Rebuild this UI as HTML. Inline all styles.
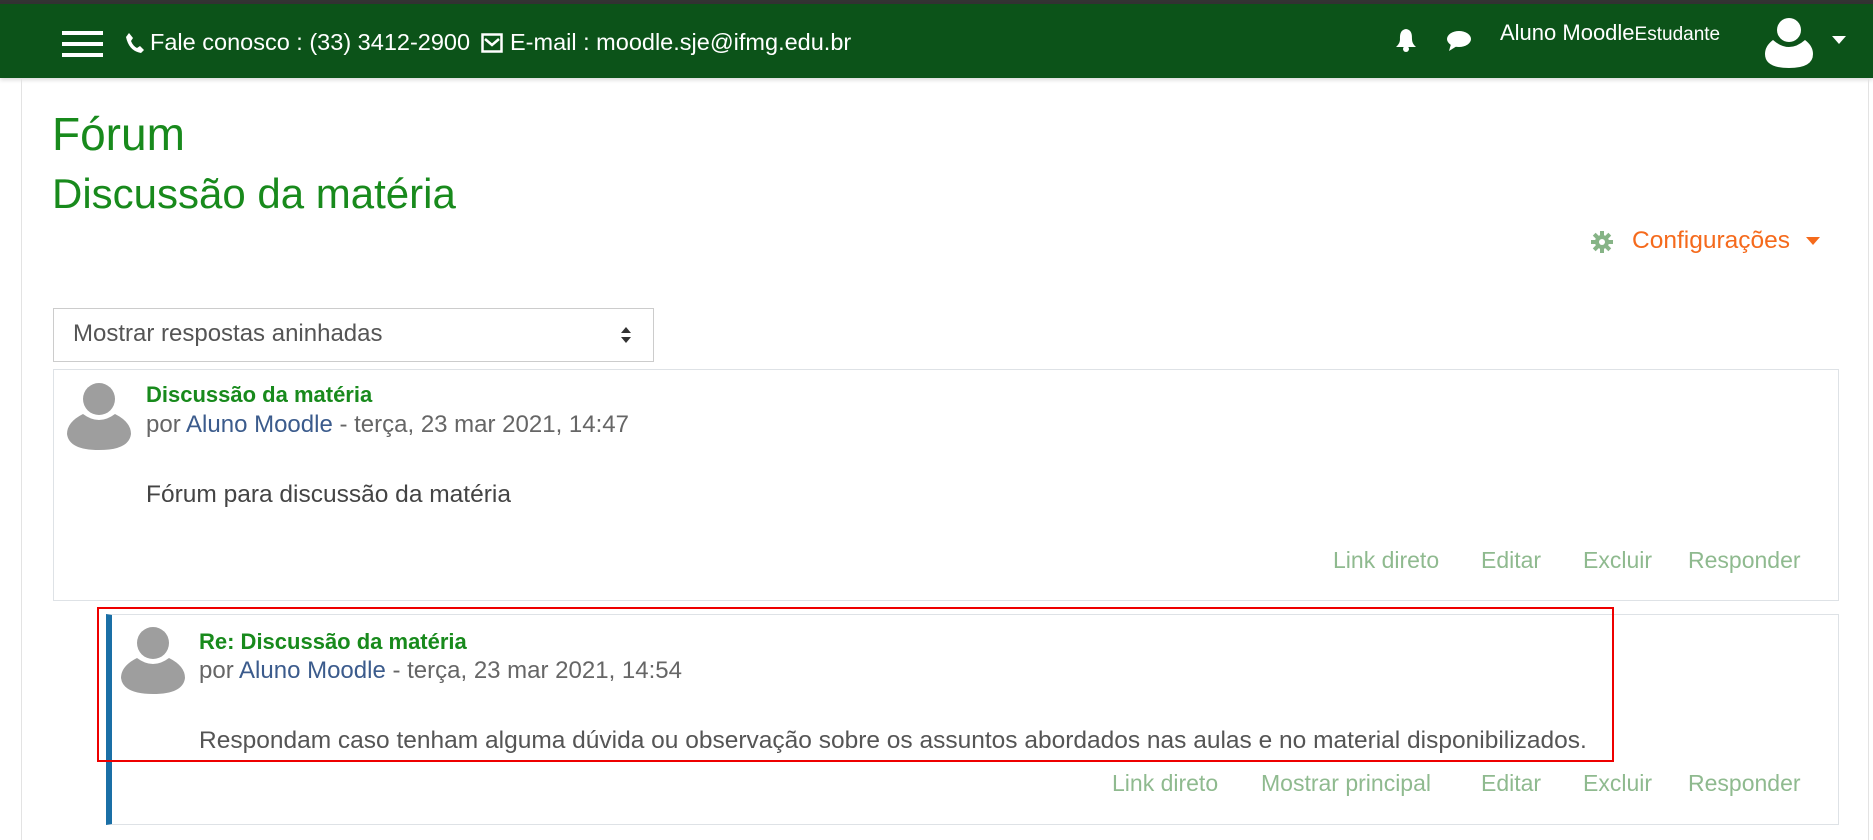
<!DOCTYPE html>
<html><head><meta charset="utf-8"><style>
*{margin:0;padding:0;box-sizing:border-box}
body{width:1873px;height:840px;overflow:hidden;background:#fff;font-family:"Liberation Sans",sans-serif;position:relative;color:#444}
.a{position:absolute;white-space:nowrap}
.top{position:absolute;left:0;top:0;width:1873px;height:4px;background:#333}
.nav{position:absolute;left:0;top:4px;width:1873px;height:74px;background:#0c5319;box-shadow:0 2px 4px rgba(0,0,0,.15)}
.ham{position:absolute;left:62px;width:41px;height:4px;background:#fff}
.nt{color:#fff;font-size:23.5px}
.box{position:absolute;border:1px solid #dee2e6;background:#fff}
.ttl{color:#188a1c;font-weight:bold;font-size:22px}
.by{color:#666;font-size:24px}
.by b{font-weight:normal;color:#3b5b8c}
.lk{color:#8fba8f;font-size:23px}
</style></head><body>
<div class="top"></div>
<div class="nav"></div>
<div class="ham" style="top:31px"></div><div class="ham" style="top:42px"></div><div class="ham" style="top:53px"></div>
<svg class="a" style="left:125px;top:32px" width="20" height="22" viewBox="0 0 20 22"><path d="M4 1 L8 6 L6 9 Q8 14 12 16 L15 14 L19 18 L16 21 Q4 19 1 5 Z" fill="#fff"/></svg>
<div class="a nt" style="left:150px;top:29px">Fale conosco : (33) 3412-2900</div>
<svg class="a" style="left:481px;top:33px" width="22" height="20" viewBox="0 0 22 20"><rect x="1.5" y="1.5" width="19" height="17" fill="none" stroke="#fff" stroke-width="2.5"/><path d="M4 6 L11 12 L18 6" fill="none" stroke="#fff" stroke-width="2.5"/></svg>
<div class="a nt" style="left:510px;top:29px">E-mail : moodle.sje@ifmg.edu.br</div>
<svg class="a" style="left:1395px;top:28px" width="22" height="24" viewBox="0 0 22 24"><path d="M11 1 C5 2 5 7 5 11 C5 15 3 17 1 19 L21 19 C19 17 17 15 17 11 C17 7 17 2 11 1Z" fill="#fff"/><circle cx="11" cy="21" r="3" fill="#fff"/></svg>
<svg class="a" style="left:1446px;top:30px" width="26" height="22" viewBox="0 0 26 22"><ellipse cx="13" cy="9" rx="12" ry="8" fill="#fff"/><path d="M5 14 L3 21 L11 16Z" fill="#fff"/></svg>
<div class="a" style="left:1500px;top:20px;color:#fff;font-size:22px">Aluno Moodle<span style="font-size:19px">Estudante</span></div>
<svg class="a" style="left:1763px;top:16px" width="52" height="52" viewBox="0 0 52 52"><circle cx="26" cy="14" r="12" fill="#fff"/><path d="M10 24 Q26 38 42 24 Q50 30 50 38 Q50 52 26 52 Q2 52 2 38 Q2 30 10 24Z" fill="#fff"/></svg>
<svg class="a" style="left:1832px;top:36px" width="14" height="8"><path d="M0 0 L14 0 L7 8Z" fill="#fff"/></svg>
<div class="a" style="left:21px;top:78px;width:1px;height:762px;background:#e3e3e3"></div>
<div class="a" style="left:1868px;top:78px;width:1px;height:762px;background:#e3e3e3"></div>
<div class="a" style="left:52px;top:107px;color:#188a1c;font-size:46px">Fórum</div>
<div class="a" style="left:52px;top:170px;color:#188a1c;font-size:42px">Discussão da matéria</div>
<svg class="a" style="left:1591px;top:231px" width="22" height="22" viewBox="0 0 22 22"><g fill="#86b486"><circle cx="11" cy="11" r="7"/><rect x="9" y="0" width="4" height="22"/><rect x="0" y="9" width="22" height="4"/><rect x="9" y="0" width="4" height="22" transform="rotate(45 11 11)"/><rect x="9" y="0" width="4" height="22" transform="rotate(-45 11 11)"/></g><circle cx="11" cy="11" r="3" fill="#fff"/></svg>
<div class="a" style="left:1632px;top:227px;color:#f56a1c;font-size:24.5px">Configurações</div>
<svg class="a" style="left:1806px;top:237px" width="14" height="8"><path d="M0 0 L14 0 L7 8Z" fill="#f56a1c"/></svg>
<div class="box" style="left:53px;top:308px;width:601px;height:54px;border-color:#ccc"></div>
<div class="a" style="left:73px;top:320px;color:#555;font-size:24px">Mostrar respostas aninhadas</div>
<svg class="a" style="left:620px;top:326px" width="12" height="18"><path d="M1 7 L11 7 L6 1Z M1 11 L11 11 L6 17Z" fill="#333"/></svg>
<div class="box" style="left:53px;top:369px;width:1786px;height:232px"></div>
<svg class="a" style="left:67px;top:382px" width="64" height="68" viewBox="0 0 64 68"><circle cx="32" cy="17" r="16" fill="#9e9e9e"/><path d="M16 32 Q32 44 48 32 Q64 40 64 52 Q62 68 32 68 Q2 68 0 52 Q0 40 16 32Z" fill="#9e9e9e"/></svg>
<div class="a ttl" style="left:146px;top:382px">Discussão da matéria</div>
<div class="a by" style="left:146px;top:411px">por <b>Aluno Moodle</b> - terça, 23 mar 2021, 14:47</div>
<div class="a" style="left:146px;top:481px;font-size:24.5px;color:#444">Fórum para discussão da matéria</div>
<div class="a lk" style="left:1333px;top:547px">Link direto</div>
<div class="a lk" style="left:1481px;top:547px">Editar</div>
<div class="a lk" style="left:1583px;top:547px">Excluir</div>
<div class="a lk" style="left:1688px;top:547px">Responder</div>
<div class="box" style="left:106px;top:614px;width:1733px;height:211px;border-left:6px solid #1a6fa6"></div>
<svg class="a" style="left:121px;top:626px" width="64" height="68" viewBox="0 0 64 68"><circle cx="32" cy="17" r="16" fill="#9e9e9e"/><path d="M16 32 Q32 44 48 32 Q64 40 64 52 Q62 68 32 68 Q2 68 0 52 Q0 40 16 32Z" fill="#9e9e9e"/></svg>
<div class="a ttl" style="left:199px;top:629px">Re: Discussão da matéria</div>
<div class="a by" style="left:199px;top:657px">por <b>Aluno Moodle</b> - terça, 23 mar 2021, 14:54</div>
<div class="a" style="left:199px;top:727px;font-size:24.5px;color:#555">Respondam caso tenham alguma dúvida ou observação sobre os assuntos abordados nas aulas e no material disponibilizados.</div>
<div class="a" style="left:97px;top:607px;width:1517px;height:155px;border:2px solid #e00"></div>
<div class="a lk" style="left:1112px;top:770px">Link direto</div>
<div class="a lk" style="left:1261px;top:770px">Mostrar principal</div>
<div class="a lk" style="left:1481px;top:770px">Editar</div>
<div class="a lk" style="left:1583px;top:770px">Excluir</div>
<div class="a lk" style="left:1688px;top:770px">Responder</div>
</body></html>
